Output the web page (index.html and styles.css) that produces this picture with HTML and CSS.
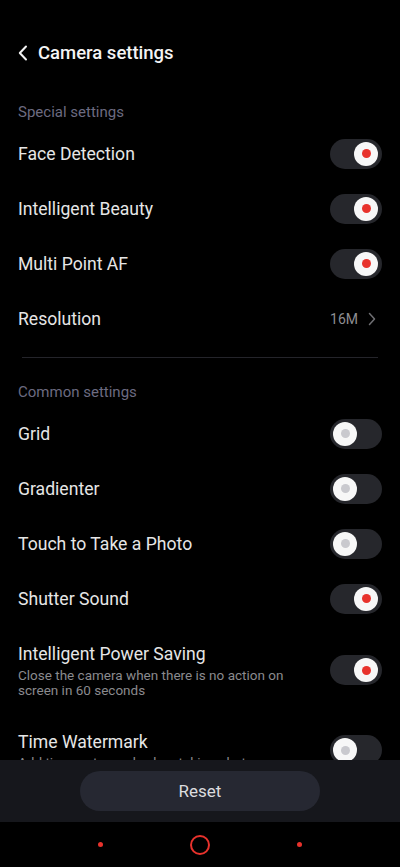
FILE: index.html
```html
<!DOCTYPE html>
<html lang="en">
<head>
<meta charset="utf-8">
<title>Camera settings</title>
<link rel="stylesheet" href="styles.css">
</head>
<body>
<div class="page">
  <header class="header">
    <svg class="back" width="10" height="16" viewBox="0 0 10 16"><path d="M8 1.5 L1.8 8 L8 14.5" fill="none" stroke="#f2f2f2" stroke-width="2" stroke-linecap="round" stroke-linejoin="round"/></svg>
    <h1 class="title">Camera settings</h1>
  </header>

  <div class="section-label first">Special settings</div>
  <div class="row"><span class="label">Face Detection</span><span class="toggle on"><span class="knob"></span></span></div>
  <div class="row"><span class="label">Intelligent Beauty</span><span class="toggle on"><span class="knob"></span></span></div>
  <div class="row"><span class="label">Multi Point AF</span><span class="toggle on"><span class="knob"></span></span></div>
  <div class="row"><span class="label">Resolution</span>
    <span class="value">16M
      <svg class="chev" width="8" height="14" viewBox="0 0 8 14"><path d="M1.5 1.5 L6.5 7 L1.5 12.5" fill="none" stroke="#6f6f73" stroke-width="1.5" stroke-linecap="round" stroke-linejoin="round"/></svg>
    </span>
  </div>

  <div class="divider"></div>

  <div class="section-label">Common settings</div>
  <div class="row"><span class="label">Grid</span><span class="toggle"><span class="knob"></span></span></div>
  <div class="row"><span class="label">Gradienter</span><span class="toggle"><span class="knob"></span></span></div>
  <div class="row"><span class="label">Touch to Take a Photo</span><span class="toggle"><span class="knob"></span></span></div>
  <div class="row"><span class="label">Shutter Sound</span><span class="toggle on"><span class="knob"></span></span></div>
  <div class="row tall">
    <div class="text">
      <div class="label">Intelligent Power Saving</div>
      <div class="sub">Close the camera when there is no action on screen in 60 seconds</div>
    </div>
    <span class="toggle on"><span class="knob"></span></span>
  </div>
  <div class="row tall">
    <div class="text">
      <div class="label">Time Watermark</div>
      <div class="sub">Add time watermark when taking photos</div>
    </div>
    <span class="toggle"><span class="knob"></span></span>
  </div>
</div>

<footer class="footer">
  <div class="actions">
    <button class="reset">Reset</button>
  </div>
  <nav class="navbar">
    <span class="dot"></span>
    <span class="ring"></span>
    <span class="dot"></span>
  </nav>
</footer>
</body>
</html>
```

FILE: styles.css
```css
html, body {
  margin: 0;
  padding: 0;
  background: #000;
  overflow: hidden;
  height: 100%;
}
body {
  font-family: Roboto, "Noto Sans", "Liberation Sans", sans-serif;
  color: #e8e8e8;
}
.page {
  width: 400px;
}
.header {
  display: flex;
  align-items: center;
  gap: 10px;
  height: 28px;
  padding: 39px 18px 17px;
}
.back {
  display: block;
}
.title {
  margin: 0;
  font-size: 18.5px;
  font-weight: 500;
  color: #f4f4f4;
  line-height: 28px;
}
.section-label {
  font-size: 15px;
  line-height: 20px;
  color: #6c6b80;
  padding: 24px 18px 4px;
}
.section-label.first {
  padding-top: 18px;
}
.row {
  display: flex;
  align-items: center;
  justify-content: space-between;
  height: 55px;
  padding: 0 18px;
}
.row.tall {
  height: auto;
  padding-top: 17px;
  padding-bottom: 16px;
}
.label {
  font-size: 17.6px;
  line-height: 22px;
  color: #e6e6e6;
}
.text {
  width: 292px;
}
.sub {
  margin-top: 2.5px;
  font-size: 13.5px;
  line-height: 15px;
  color: #8a8a8e;
}
.toggle {
  flex: none;
  width: 52px;
  height: 30px;
  border-radius: 15px;
  background: #26272c;
  display: flex;
  align-items: center;
  padding: 0 3px 0 3px;
  box-sizing: border-box;
  justify-content: flex-start;
}
.toggle.on {
  justify-content: flex-end;
  padding-right: 4px;
}
.knob {
  width: 24px;
  height: 24px;
  border-radius: 50%;
  background: #f7f7f7;
  display: flex;
  align-items: center;
  justify-content: center;
}
.knob::after {
  content: "";
  width: 9px;
  height: 9px;
  border-radius: 50%;
  background: #c9c9ce;
}
.toggle.on .knob::after {
  background: #e8322c;
}
.value {
  display: flex;
  align-items: center;
  gap: 10px;
  font-size: 14px;
  color: #8e8e92;
  margin-right: 6px;
}
.chev {
  display: block;
}
.divider {
  height: 1px;
  background: #24242a;
  margin: 11px 22px 0;
}
.footer {
  position: fixed;
  left: 0;
  right: 0;
  bottom: 0;
}
.actions {
  height: 62px;
  background: #16171c;
  display: flex;
  align-items: center;
  justify-content: center;
}
.reset {
  width: 240px;
  height: 40px;
  border: none;
  border-radius: 20px;
  background: #262832;
  color: #dcdcdf;
  font-family: Roboto, "Noto Sans", sans-serif;
  font-size: 17px;
  margin-top: -1px;
}
.navbar {
  height: 45px;
  background: #000;
  display: flex;
  align-items: center;
  justify-content: space-between;
  padding: 0 98px;
}
.dot {
  width: 5px;
  height: 5px;
  border-radius: 50%;
  background: #e8322c;
}
.ring {
  width: 16px;
  height: 16px;
  border-radius: 50%;
  border: 2px solid #e8322c;
}
```
